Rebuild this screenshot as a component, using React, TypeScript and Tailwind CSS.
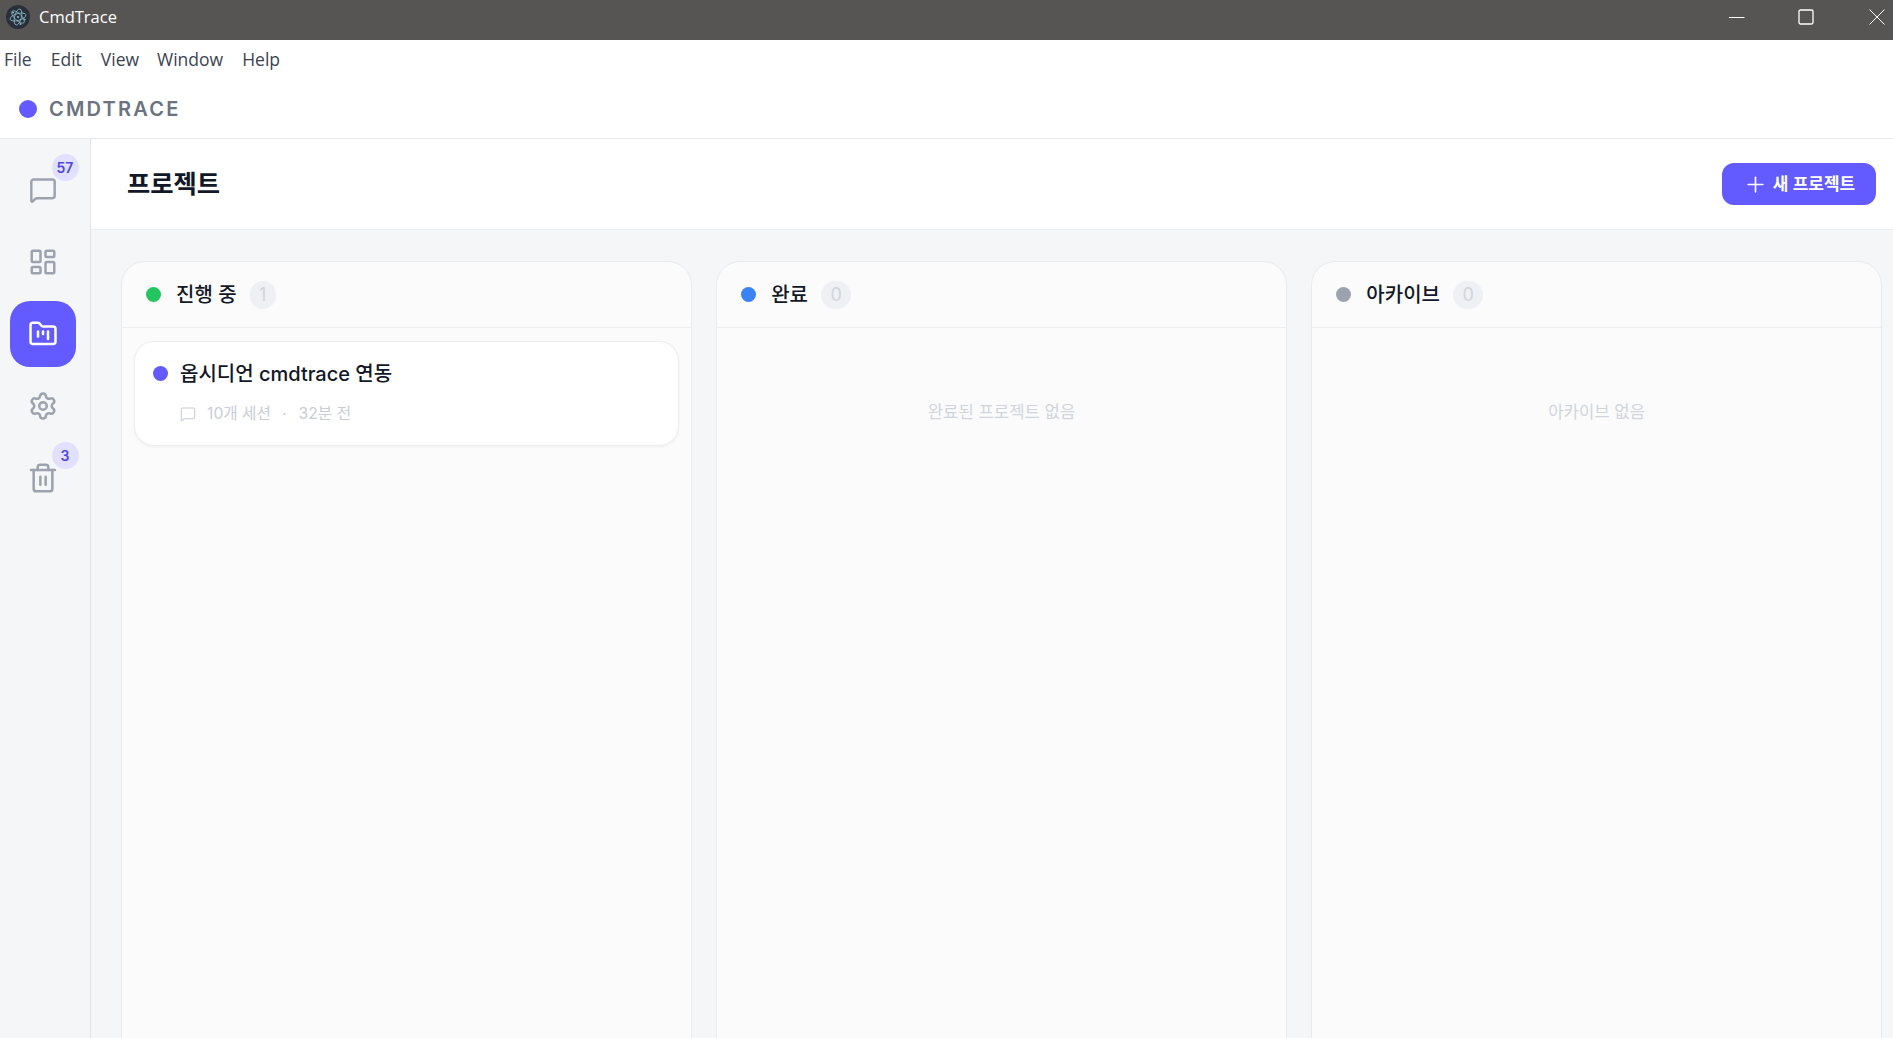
import { FolderKanban, LayoutDashboard, MessageSquare, Plus, Settings, Trash2 } from "lucide-react";

const KR = "font-['Inter','Noto_Sans_CJK_KR',sans-serif]";

function ElectronLogo() {
  return (
    <svg width="24" height="24" viewBox="0 0 24 24" fill="none">
      <circle cx="12" cy="12" r="12" fill="#2b2f3a" />
      <g stroke="#86b8c6" strokeWidth="0.8" transform="rotate(14 12 12)">
        <ellipse cx="12" cy="12" rx="8.2" ry="3.4" transform="rotate(30 12 12)" />
        <ellipse cx="12" cy="12" rx="8.2" ry="3.4" transform="rotate(90 12 12)" />
        <ellipse cx="12" cy="12" rx="8.2" ry="3.4" transform="rotate(150 12 12)" />
      </g>
      <circle cx="12" cy="12" r="1.1" fill="#86b8c6" />
      <circle cx="7" cy="7.5" r="1" fill="#86b8c6" />
      <circle cx="14.5" cy="19" r="1" fill="#86b8c6" />
      <circle cx="18.5" cy="14.5" r="1" fill="#86b8c6" />
    </svg>
  );
}

function NavItem({ icon, badge, active }: { icon: React.ReactNode; badge?: string; active?: boolean }) {
  return (
    <div className={`relative flex h-[66px] w-[66px] items-center justify-center rounded-[20px] ${active ? "bg-[#635bff] text-white" : "text-[#9ca3af]"}`}>
      {icon}
      {badge && (
        <span className="absolute -right-[3px] -top-[3px] flex h-[27px] w-[27px] items-center justify-center rounded-full bg-[#e2e0ff] text-[14px] font-semibold text-[#4f46e5]">
          {badge}
        </span>
      )}
    </div>
  );
}

function Column({ title, count, dot, children }: { title: string; count: string; dot: string; children?: React.ReactNode }) {
  return (
    <section className="h-[900px] flex-1 rounded-t-[24px] border border-[#e9ebef] bg-[#fbfbfc]">
      <header className="flex h-[66px] items-center border-b border-[#eceef1] pl-[24px]">
        <span className={`h-[15px] w-[15px] rounded-full ${dot}`} />
        <span className="ml-[15px] text-[20px] font-medium text-[#111827]">{title}</span>
        <span className="ml-[13px] flex h-[28px] items-center justify-center rounded-full bg-[#eff0f4] px-[9.5px] text-[18px] text-[#d1d5db]">
          {count}
        </span>
      </header>
      {children}
    </section>
  );
}

function Empty({ text }: { text: string }) {
  return <p className="pt-[72px] text-center text-[16.7px] text-[#d1d5db]">{text}</p>;
}

export default function App() {
  return (
    <div className={`flex h-[1038px] w-[1893px] flex-col overflow-hidden bg-white ${KR}`}>
      <div className="flex h-[40px] shrink-0 items-center bg-[#575553] pb-[6px] pl-[6px] text-white">
        <ElectronLogo />
        <span className="ml-[9px] font-['Open_Sans',sans-serif] text-[16.5px]">CmdTrace</span>
        <div className="ml-auto flex items-center pr-[8px]">
          <svg width="16" height="16" viewBox="0 0 16 16" className="text-white"><path d="M0 8.5h15.5" stroke="currentColor" strokeWidth="1" /></svg>
          <svg width="16" height="16" viewBox="0 0 16 16" className="ml-[53px]"><rect x="1" y="1" width="14" height="14" rx="1.5" fill="none" stroke="currentColor" strokeWidth="1.3" /></svg>
          <svg width="16" height="16" viewBox="0 0 16 16" className="ml-[55px]"><path d="M0.5 0.5l15 15M15.5 0.5l-15 15" stroke="currentColor" strokeWidth="1" fill="none" /></svg>
        </div>
      </div>

      <nav className="flex h-[40px] shrink-0 items-center pb-[1px] pl-[4px] font-['Open_Sans',sans-serif] text-[17.5px] text-[#3b4252]">
        <span>File</span>
        <span className="ml-[19px]">Edit</span>
        <span className="ml-[19px]">View</span>
        <span className="ml-[18px]">Window</span>
        <span className="ml-[19px]">Help</span>
      </nav>

      <div className="flex h-[59px] shrink-0 items-center border-b border-[#e8eaed] pl-[19px]">
        <span className="h-[18px] w-[18px] rounded-full bg-[#635bff]" />
        <span className="ml-[12px] text-[20px] font-semibold tracking-[2.2px] text-[#6b7280]">CMDTRACE</span>
      </div>

      <div className="flex min-h-0 flex-1">
        <aside className="flex w-[91px] shrink-0 flex-col items-center gap-[6px] border-r border-[#e3e5e9] bg-[#f5f6f8] pt-[18px] pr-[5px]">
          <NavItem icon={<MessageSquare size={28} strokeWidth={2.1} />} badge="57" />
          <NavItem icon={<LayoutDashboard size={30} strokeWidth={2} />} />
          <NavItem icon={<FolderKanban size={30} strokeWidth={2} />} active />
          <NavItem icon={<Settings size={30} strokeWidth={2} />} />
          <NavItem icon={<Trash2 size={32} strokeWidth={1.9} />} badge="3" />
        </aside>

        <main className="flex min-w-0 flex-1 flex-col bg-[#f5f6f8]">
          <div className="flex h-[91px] shrink-0 items-center justify-between border-b border-[#eceef0] bg-white pl-[36px] pr-[17px]">
            <h1 className="text-[25.3px] font-semibold text-[#111827]">프로젝트</h1>
            <button className="flex h-[42px] w-[154px] items-center justify-center gap-[5px] rounded-[12px] bg-[#635bff] text-[17px] font-semibold text-white">
              <Plus size={25} strokeWidth={1.6} />
              <span className="pt-[1px]">새 프로젝트</span>
            </button>
          </div>
          <div className="flex min-h-0 flex-1 items-start gap-[24.5px] overflow-hidden pl-[30px] pr-[11px] pt-[31px]">
            <Column title="진행 중" count="1" dot="bg-[#22c55e]">
              <article className="mx-[12px] mt-[13px] h-[105px] rounded-[20px] border border-[#eceef1] bg-white pl-[18px] pt-[16px] shadow-[0_1px_3px_rgba(0,0,0,0.05)]">
                <div className="flex items-center">
                  <span className="mb-[2px] h-[15px] w-[15px] rounded-full bg-[#635bff]" />
                  <span className="ml-[12px] text-[20px] font-medium leading-[32px] text-[#111827]">옵시디언 cmdtrace 연동</span>
                </div>
                <div className="mt-[12px] flex items-center pl-[27px] text-[15.7px] text-[#c9ccd8]">
                  <MessageSquare size={16} strokeWidth={1.6} />
                  <span className="ml-[11px]">10개 세션</span>
                  <span className="ml-[11px]">·</span>
                  <span className="ml-[12px]">32분 전</span>
                </div>
              </article>
            </Column>
            <Column title="완료" count="0" dot="bg-[#3b82f6]">
              <Empty text="완료된 프로젝트 없음" />
            </Column>
            <Column title="아카이브" count="0" dot="bg-[#9ca3af]">
              <Empty text="아카이브 없음" />
            </Column>
          </div>
        </main>
      </div>
    </div>
  );
}
